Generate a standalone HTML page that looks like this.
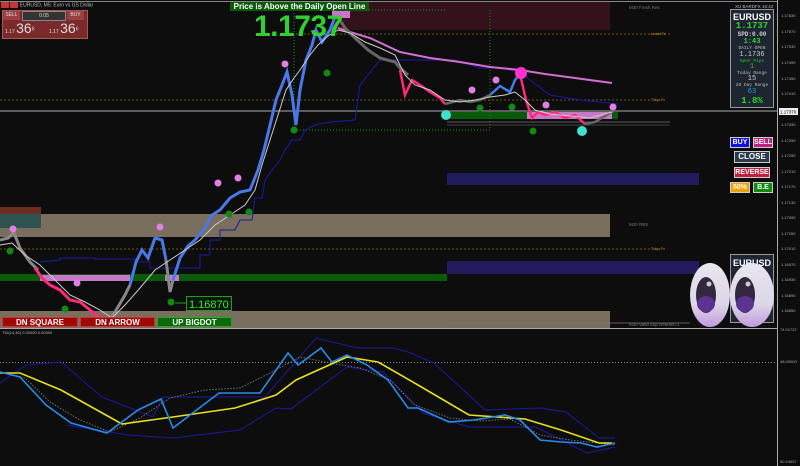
<!DOCTYPE html>
<html><head><meta charset="utf-8">
<style>
html,body{margin:0;padding:0;background:#0d0d0d;width:800px;height:466px;overflow:hidden;font-family:"Liberation Sans",sans-serif}
.a{position:absolute}
.btn{position:absolute;font:bold 7px "Liberation Sans",sans-serif;color:#fff;text-align:center;box-sizing:border-box;border:1px solid #ccc;line-height:9px}
.ip div{white-space:nowrap;overflow:visible}
</style></head><body>
<svg class="a" style="left:0;top:0" width="800" height="466" viewBox="0 0 800 466">
<rect width="800" height="466" fill="#0d0d0d"/>
<line x1="0" y1="1.5" x2="777" y2="1.5" stroke="#888" stroke-width="1"/>
<rect x="332" y="2" width="278" height="28" fill="#34121c"/>
<rect x="0" y="214" width="610" height="23" fill="#7a6e5e"/>
<rect x="0" y="311" width="610" height="17" fill="#7a6e5e"/>
<rect x="0" y="207" width="41" height="7" fill="#6a2d20"/>
<rect x="0" y="214" width="41" height="14" fill="#2e5252"/>
<rect x="447" y="173" width="252" height="12" fill="#221b5e"/>
<rect x="447" y="261" width="252" height="13" fill="#221b5e"/>
<rect x="0" y="274" width="447" height="7" fill="#0a5a0a"/>
<rect x="40" y="275" width="90" height="6" fill="#c878c8"/>
<rect x="165" y="275" width="14" height="6" fill="#c878c8"/>
<rect x="443" y="112" width="175" height="7" fill="#0a5a0a"/>
<rect x="527" y="112" width="85" height="7" fill="#c878c8"/>
<line x1="0" y1="111" x2="777" y2="111" stroke="#aaa" stroke-width="1"/>
<line x1="280" y1="34" x2="670" y2="34" stroke="#c8a020" stroke-dasharray="2,2" stroke-width=".6"/>
<line x1="0" y1="100" x2="650" y2="100" stroke="#c8a020" stroke-dasharray="2,2" stroke-width=".6"/>
<line x1="0" y1="249" x2="650" y2="249" stroke="#c8a020" stroke-dasharray="2,2" stroke-width=".6"/>
<line x1="294" y1="10" x2="294" y2="130" stroke="#1a8a1a" stroke-dasharray="1,2"/>
<line x1="490" y1="10" x2="490" y2="130" stroke="#1a8a1a" stroke-dasharray="1,2"/>
<line x1="294" y1="130" x2="490" y2="130" stroke="#1a8a1a" stroke-dasharray="1,2"/>
<line x1="294" y1="10" x2="445" y2="10" stroke="#1a8a1a" stroke-dasharray="1,2"/>
<line x1="447" y1="122" x2="670" y2="122" stroke="#777" stroke-width=".8"/>
<line x1="447" y1="125" x2="670" y2="125" stroke="#555" stroke-width=".8"/>
<line x1="447" y1="323" x2="690" y2="323" stroke="#777" stroke-width=".8"/>
<polyline fill="none" stroke="#1a1aa8" stroke-width="1" points="40,262 60,260 60,258 95,258 95,259 135,259 135,262 150,262 150,268 170,268 200,268 200,255 210,255 210,240 220,240 220,230 235,230 240,220 252,220 255,198 262,198 265,180 272,170 280,160 285,150 292,140 300,140 305,130 315,125 330,122 355,120 360,85 380,60 420,60 455,60 480,68 500,68 520,72 530,80 550,95 580,100 618,104"/>
<polyline fill="none" stroke="#d070d0" stroke-width="2" points="338,28 350,32 370,38 400,52 430,58 460,62 490,67 520,70 545,74 575,78 612,83"/>
<polyline fill="none" stroke="#888" stroke-width="3" points="0,240 8,238 14,233 20,248 30,262 38,270"/>
<polyline fill="none" stroke="#ff2a7a" stroke-width="3" points="35,268 42,278 50,285 60,290 70,300 80,302 90,310 100,318 108,322"/>
<polyline fill="none" stroke="#888" stroke-width="3" points="108,322 115,312 125,295 130,285"/>
<polyline fill="none" stroke="#4a78e8" stroke-width="3" points="130,285 136,262 142,250 148,258 155,238 162,240 166,260"/>
<polyline fill="none" stroke="#888" stroke-width="3" points="166,260 170,292 173,280"/>
<polyline fill="none" stroke="#4a78e8" stroke-width="3" points="173,280 180,258 188,246 195,240 205,228 212,215 220,210 230,198 240,192 250,190 258,170 264,150 270,125 276,100 282,85 287,72 292,95 296,125 300,90 306,60 312,45 316,30 322,42 330,30 336,14"/>
<polyline fill="none" stroke="#666" stroke-width="3" points="336,14 345,28 355,38 368,50 380,58 395,62 400,68 408,75"/>
<polyline fill="none" stroke="#ff2a7a" stroke-width="2.5" points="400,70 405,95 412,80 420,85 430,92 440,98 445,104"/>
<polyline fill="none" stroke="#666" stroke-width="2.5" points="445,104 460,100 470,102 480,100 490,95"/>
<polyline fill="none" stroke="#4a78e8" stroke-width="2.5" points="490,95 500,86 510,92 515,80 520,74"/>
<polyline fill="none" stroke="#ff2a7a" stroke-width="2.5" points="520,74 526,100 532,118 538,112 545,115 555,112 565,118 575,115 585,124"/>
<polyline fill="none" stroke="#666" stroke-width="2.5" points="585,124 595,122 605,116 615,110"/>
<polyline fill="none" stroke="#ccc" stroke-width="1" points="0,245 12,243 25,255 40,265 55,280 70,295 85,302 100,310 112,318 125,305 140,288 155,270 170,260 185,250 200,240 215,225 230,215 245,205 255,190 262,165 270,140 278,115 286,90 294,78 300,70 310,55 318,45 328,36 338,30 350,33 365,42 380,48 395,55 405,75 415,85 430,90 445,100 460,102 475,100 490,97 505,95 515,92 525,100 535,110 550,114 570,116 590,118 612,112"/>
<g fill="#e080e0"><circle cx="13" cy="229" r="3.5"/><circle cx="77" cy="283" r="3.5"/><circle cx="160" cy="227" r="3.5"/><circle cx="218" cy="183" r="3.5"/><circle cx="238" cy="178" r="3.5"/><circle cx="285" cy="64" r="3.5"/><circle cx="472" cy="90" r="3.5"/><circle cx="496" cy="80" r="3.5"/><circle cx="546" cy="105" r="3.5"/><circle cx="613" cy="107" r="3.5"/></g>
<circle cx="521" cy="73" r="6" fill="#ff30d0"/>
<g fill="#108a10"><circle cx="10" cy="251" r="3.5"/><circle cx="65" cy="309" r="3.5"/><circle cx="171" cy="302" r="3.5"/><circle cx="229" cy="214" r="3.5"/><circle cx="249" cy="212" r="3.5"/><circle cx="327" cy="73" r="3.5"/><circle cx="294" cy="130" r="3.5"/><circle cx="480" cy="108" r="3.5"/><circle cx="512" cy="107" r="3.5"/><circle cx="533" cy="131" r="3.5"/></g>
<circle cx="446" cy="115" r="5" fill="#40e0d0"/><circle cx="582" cy="131" r="5" fill="#40e0d0"/>
<rect x="332" y="8" width="18" height="10" fill="#d070d0"/>
<line x1="175" y1="303" x2="186" y2="303" stroke="#1aa01a"/>
<rect x="186.5" y="296.5" width="45" height="14" fill="#0a1a0a" stroke="#1aa01a"/>
<text x="189" y="308" font-family="Liberation Sans" font-size="11" fill="#40e040">1.16870</text>
<g font-family="Liberation Sans" font-size="4.5" fill="#777">
<text x="629" y="9">M30 Fresh Res</text><text x="629" y="226">M30 RBS</text><text x="629" y="326">M30 Valid Sup  Retests=1</text>
</g>
<g font-family="Liberation Sans" font-size="3.5" fill="#c8a020"><text x="651" y="35">Londn Fx</text><text x="651" y="101">Tokyo Fx</text><text x="651" y="250">Tokyo Fx</text></g>
<line x1="777.5" y1="0" x2="777.5" y2="466" stroke="#aaa"/>
<line x1="0" y1="328.5" x2="777" y2="328.5" stroke="#aaa"/>
<g font-family="Liberation Sans" font-size="4" fill="#aaa">
<text x="781" y="17">1.17630</text><text x="781" y="33">1.17570</text><text x="781" y="48">1.17530</text><text x="781" y="64">1.17490</text><text x="781" y="80">1.17450</text><text x="781" y="95">1.17410</text><text x="781" y="126">1.17330</text><text x="781" y="142">1.17290</text><text x="781" y="157">1.17250</text><text x="781" y="173">1.17210</text><text x="781" y="188">1.17170</text><text x="781" y="204">1.17130</text><text x="781" y="219">1.17090</text><text x="781" y="235">1.17050</text><text x="781" y="250">1.17010</text><text x="781" y="266">1.16970</text><text x="781" y="281">1.16930</text><text x="781" y="297">1.16890</text><text x="781" y="312">1.16850</text><text x="780" y="331">74.01737</text><text x="780" y="363">48.00000</text><text x="780" y="463">50.24657</text>
<text x="2" y="334" fill="#bbb">TDI(14,40) 0.00000 0.00000</text>
</g>
<rect x="779" y="108" width="19" height="7" fill="#eee"/>
<text x="780" y="113.5" font-family="Liberation Sans" font-size="4.5" fill="#000">1.17370</text>
<line x1="0" y1="362.5" x2="777" y2="362.5" stroke="#bbb" stroke-dasharray="1,2" stroke-width=".7"/>
<polyline fill="none" stroke="#1a1aa0" stroke-width="1" points="0,383 26,365 61,362 102,397 153,417 163,397 265,397 316,338 357,348 393,348 408,352 434,363 485,410 541,408 566,412 599,438 615,438"/>
<polyline fill="none" stroke="#1a1aa0" stroke-width="1" points="66,425 128,435 173,438 240,430 276,408 291,409 347,367 383,372 423,413 469,427 536,427 587,453 615,447"/>
<polyline fill="none" stroke="#888" stroke-width=".8" stroke-dasharray="1.5,1.5" points="0,372 25,378 50,402 80,420 110,432 140,418 170,398 205,390 240,388 270,373 300,357 330,363 360,368 390,380 415,405 450,418 480,421 510,419 540,435 570,440 615,445"/>
<polyline fill="none" stroke="#e8e020" stroke-width="1.6" points="0,373 20,373 61,390 122,424 173,417 235,408 276,395 296,380 347,357 378,362 418,385 469,415 525,419 561,430 599,443 612,443"/>
<polyline fill="none" stroke="#2a8ae8" stroke-width="1.6" points="0,372 20,377 46,405 71,423 107,433 138,410 161,399 173,428 194,412 219,393 260,393 288,353 298,365 321,348 332,362 347,355 367,365 388,380 408,408 418,408 449,422 474,420 505,415 520,420 540,440 561,442 581,443 597,447 615,443"/>
</svg>
<div class="a" style="left:730px;top:254px;width:44px;height:69px;background:#1d2630;border:1px solid #999;box-sizing:border-box;color:#fff;font:bold 9px 'Liberation Sans';text-align:center;padding-top:3px">EURUSD</div>
<svg class="a" style="left:688px;top:260px" width="90" height="70" viewBox="0 0 90 70">
<defs><linearGradient id="ewg" x1="0" y1="0" x2="0" y2="1"><stop offset="0" stop-color="#e8e6ee"/><stop offset=".65" stop-color="#dcd6e6"/><stop offset="1" stop-color="#c09ae0"/></linearGradient></defs>
<ellipse cx="22" cy="35" rx="20" ry="32" fill="url(#ewg)"/>
<ellipse cx="18" cy="35" rx="10" ry="18" fill="#33263f"/>
<ellipse cx="18" cy="44" rx="9" ry="8" fill="#5a3490"/>
<circle cx="21" cy="24" r="2.5" fill="#ccc"/>
<ellipse cx="64" cy="35" rx="22" ry="32" fill="url(#ewg)"/>
<ellipse cx="57" cy="35" rx="10" ry="18" fill="#33263f"/>
<ellipse cx="57" cy="44" rx="9" ry="8" fill="#5a3490"/>
<circle cx="60" cy="24" r="2.5" fill="#ccc"/>
</svg>
<div class="a" style="left:1px;top:2px;font:5px 'Liberation Sans';color:#bbb"><span style="display:inline-block;width:8px;height:6px;background:#c33;vertical-align:middle"></span> <span style="display:inline-block;width:8px;height:6px;background:#c33;vertical-align:middle"></span> EURUSD, M5: Euro vs US Dollar</div>
<div class="a" style="left:2px;top:10px;width:84px;height:27px;background:#7a2a2a;border:1px solid #a55"></div>
<div class="a" style="left:3px;top:11px;width:17px;height:9px;background:#9a4040;color:#ddd;font:5px 'Liberation Sans';text-align:center;line-height:9px">SELL</div>
<div class="a" style="left:22px;top:11px;width:42px;height:8px;background:#333;border:1px solid #888;color:#ddd;font:5px 'Liberation Sans';text-align:center;line-height:8px">0.05</div>
<div class="a" style="left:67px;top:11px;width:17px;height:9px;background:#9a4040;color:#ddd;font:5px 'Liberation Sans';text-align:center;line-height:9px">BUY</div>
<div class="a" style="left:5px;top:20px;color:#ddd;font:5px 'Liberation Sans'">1.17 <span style="font-size:14px">36</span><sup style="font-size:5px">6</sup></div>
<div class="a" style="left:49px;top:20px;color:#ddd;font:5px 'Liberation Sans'">1.17 <span style="font-size:14px">36</span><sup style="font-size:5px">6</sup></div>
<div class="a" style="left:230px;top:2px;width:139px;height:9px;background:#0a5a0a;color:#fff;font:bold 8px 'Liberation Sans';line-height:9px;text-align:center;white-space:nowrap">Price is Above the Daily Open Line</div>
<div class="a" style="left:254px;top:10px;color:#30d030;font:bold 30px 'Liberation Sans';letter-spacing:-0.5px">1.1737</div>
<div class="a" style="left:735px;top:4px;font:4.5px 'Liberation Sans';color:#bbb">XU BARDFX 16:42</div>
<div class="a ip" style="left:730px;top:9px;width:44px;height:99px;background:#1d2630;border:1px solid #999;box-sizing:border-box;text-align:center;padding-top:2px">
<div style="color:#fff;font:bold 9px/10px 'Liberation Sans';height:10px">EURUSD</div>
<div style="color:#30d030;font:bold 9px/9px 'Liberation Mono';height:9px">1.1737</div>
<div style="color:#ccc;font:bold 6px/7px 'Liberation Mono';height:7px">SPD:0.00</div>
<div style="color:#30d030;font:bold 7px/8px 'Liberation Mono';height:8px">1:43</div>
<div style="color:#bbb;font:4.5px/5px 'Liberation Mono';height:5px">DAILY OPEN</div>
<div style="color:#ccc;font:7px/8px 'Liberation Mono';height:8px">1.1736</div>
<div style="color:#30c030;font:4.5px/5px 'Liberation Mono';height:5px">Open Pips</div>
<div style="color:#30c030;font:7px/7px 'Liberation Mono';height:7px">1</div>
<div style="color:#bbb;font:4.5px/5px 'Liberation Mono';height:5px">Today Range</div>
<div style="color:#ccc;font:7px/7px 'Liberation Mono';height:7px">15</div>
<div style="color:#bbb;font:4.5px/5px 'Liberation Mono';height:5px">20 Day Range</div>
<div style="color:#20a0e0;font:7px/8px 'Liberation Mono';height:8px">63</div>
<div style="color:#30d030;font:bold 9px/10px 'Liberation Mono';height:10px">1.8%</div>
</div>
<div class="btn" style="left:730px;top:137px;width:20px;height:11px;background:#1010e0">BUY</div>
<div class="btn" style="left:753px;top:137px;width:20px;height:11px;background:#c02080">SELL</div>
<div class="btn" style="left:734px;top:151px;width:36px;height:12px;background:#2a3a4a;font-size:8px">CLOSE</div>
<div class="btn" style="left:734px;top:167px;width:36px;height:11px;background:#c02040">REVERSE</div>
<div class="btn" style="left:730px;top:182px;width:20px;height:11px;background:#f0a000">50%</div>
<div class="btn" style="left:753px;top:182px;width:20px;height:11px;background:#108a10">B.E</div>
<div class="btn" style="left:2px;top:317px;width:76px;height:10px;background:#a00808;border-color:#c33;font-size:8px">DN SQUARE</div>
<div class="btn" style="left:80px;top:317px;width:75px;height:10px;background:#a00808;border-color:#c33;font-size:8px">DN ARROW</div>
<div class="btn" style="left:157px;top:317px;width:75px;height:10px;background:#0a6a0a;border-color:#2a2;font-size:8px">UP BIGDOT</div>
</body></html>
